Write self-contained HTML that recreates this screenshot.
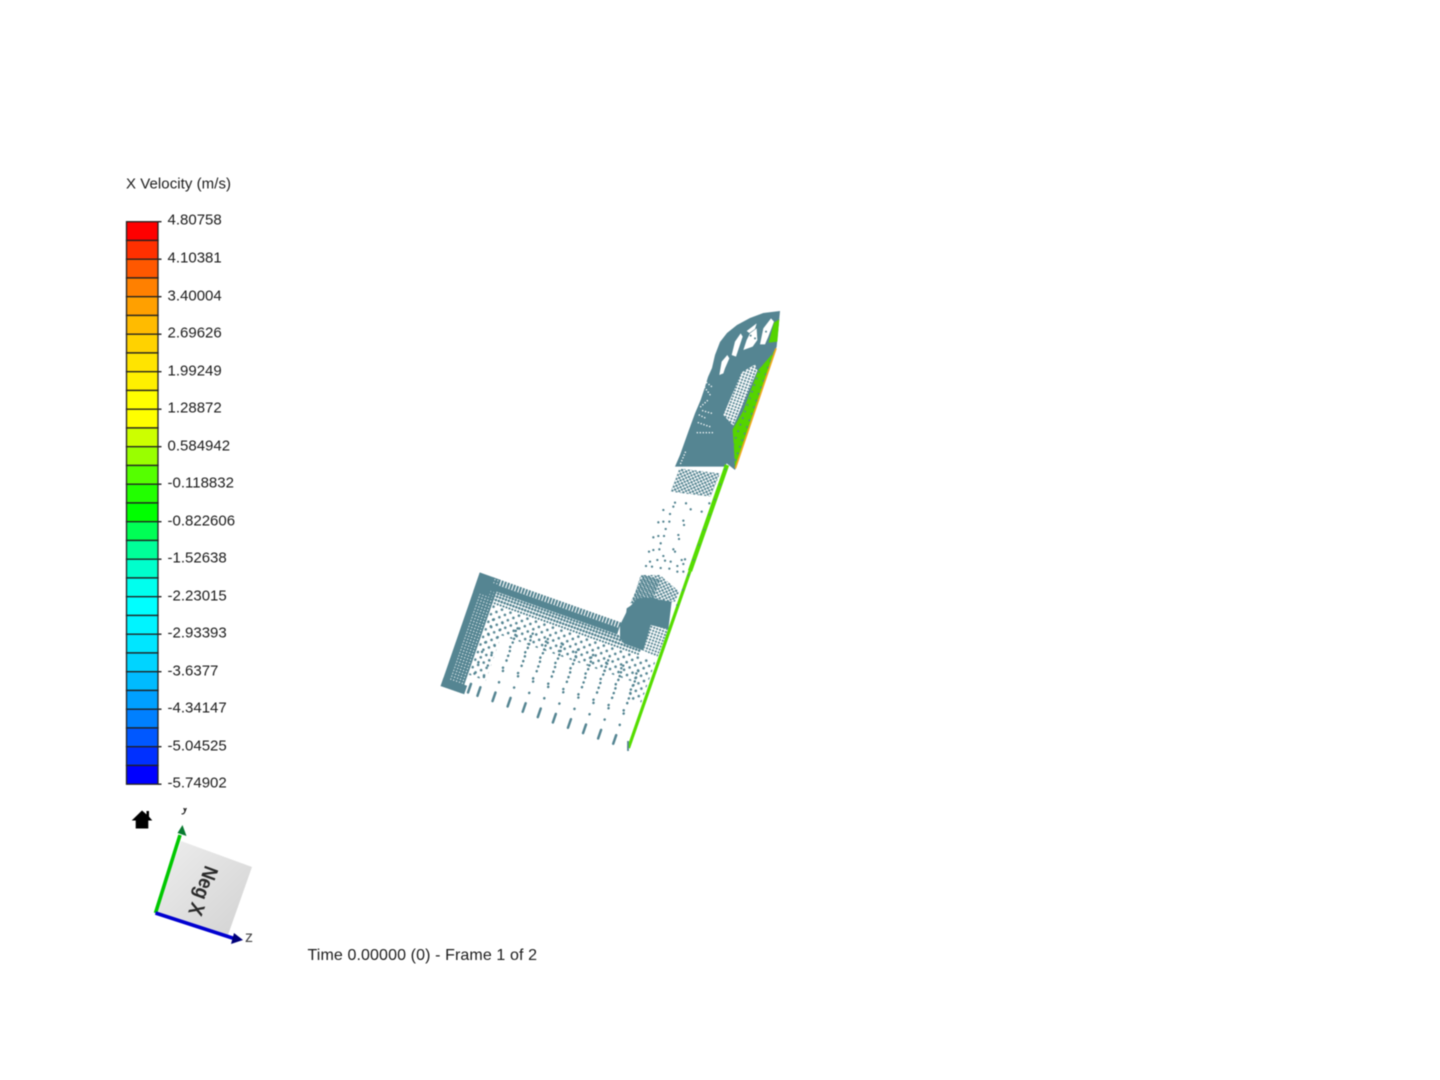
<!DOCTYPE html>
<html><head><meta charset="utf-8"><title>X Velocity</title>
<style>
html,body{margin:0;padding:0;background:#fff;width:1440px;height:1080px;overflow:hidden}
svg{position:absolute;left:0;top:0;filter:blur(.45px)}
text{font-family:"Liberation Sans",Arial,sans-serif;fill:#1c1c1c}
</style></head><body>
<svg width="1440" height="1080" viewBox="0 0 1440 1080" xmlns="http://www.w3.org/2000/svg">
<defs>
<pattern id="holes" width="3.1" height="3.1" patternUnits="userSpaceOnUse"><rect width="3.1" height="3.1" fill="#558592"/><circle cx="1.5" cy="1.5" r=".62" fill="#fff"/></pattern>
<pattern id="sparse" width="9" height="8" patternUnits="userSpaceOnUse"><circle cx="1.6" cy="1.6" r="1.3" fill="#558592"/><circle cx="6.1" cy="5.6" r="1.3" fill="#558592"/></pattern>
<pattern id="gridZ" width="9.3" height="9.3" patternUnits="userSpaceOnUse" patternTransform="rotate(19.5)"><rect width="9.3" height="9.3" fill="#fff"/><circle cx="4.6" cy="4.6" r="3.3" fill="#558592"/></pattern>
<pattern id="mottZ" width="13" height="12.400" patternUnits="userSpaceOnUse" patternTransform="rotate(19.5)"><circle cx="3.600" cy="3.600" r="3.800" fill="#558592"/><circle cx="10" cy="9.400" r="3.600" fill="#558592"/></pattern>
<pattern id="gdotsZ" width="21" height="21" patternUnits="userSpaceOnUse" patternTransform="rotate(19.5)"><circle cx="9" cy="9" r="3" fill="#558592"/></pattern>
<linearGradient id="cube" x1="0" y1="0" x2="1" y2="1"><stop offset="0" stop-color="#eeeeee"/><stop offset="1" stop-color="#d2d2d2"/></linearGradient>
<clipPath id="clipTop"><rect x="100" y="808" width="200" height="150"/></clipPath>
<path id="col" d="M0-10V-1M0-21v.1M0-33v.1M0-44v.1M0-54v.1M0-63v.1M0-71v.1M0-78v.1" fill="none" stroke="#558592" stroke-width="2.500" stroke-linecap="round"/>
<path id="col2" d="M7-36v.1M8-49v.1M7-58v.1M8-67v.1M7-75v.1" fill="none" stroke="#558592" stroke-width="2.500" stroke-linecap="round"/>
</defs>

<!-- legend -->
<text x="126" y="188.500" font-size="15" textLength="105">X Velocity (m/s)</text>
<g stroke="#222" stroke-width="1.3">
<rect x="126.500" y="221.700" width="31.500" height="18.750" fill="#ff0000"/>
<rect x="126.500" y="240.450" width="31.500" height="18.750" fill="#ff3000"/>
<rect x="126.500" y="259.200" width="31.500" height="18.750" fill="#ff5800"/>
<rect x="126.500" y="277.950" width="31.500" height="18.750" fill="#ff8000"/>
<rect x="126.500" y="296.700" width="31.500" height="18.750" fill="#ffa000"/>
<rect x="126.500" y="315.450" width="31.500" height="18.750" fill="#ffbb00"/>
<rect x="126.500" y="334.200" width="31.500" height="18.750" fill="#ffd200"/>
<rect x="126.500" y="352.950" width="31.500" height="18.750" fill="#ffe400"/>
<rect x="126.500" y="371.700" width="31.500" height="18.750" fill="#fff000"/>
<rect x="126.500" y="390.450" width="31.500" height="18.750" fill="#ffff00"/>
<rect x="126.500" y="409.200" width="31.500" height="18.750" fill="#ffff00"/>
<rect x="126.500" y="427.950" width="31.500" height="18.750" fill="#ccff00"/>
<rect x="126.500" y="446.700" width="31.500" height="18.750" fill="#99ff00"/>
<rect x="126.500" y="465.450" width="31.500" height="18.750" fill="#55ff00"/>
<rect x="126.500" y="484.200" width="31.500" height="18.750" fill="#22ff00"/>
<rect x="126.500" y="502.950" width="31.500" height="18.750" fill="#00ff00"/>
<rect x="126.500" y="521.700" width="31.500" height="18.750" fill="#00ff55"/>
<rect x="126.500" y="540.450" width="31.500" height="18.750" fill="#00ff99"/>
<rect x="126.500" y="559.200" width="31.500" height="18.750" fill="#00ffcc"/>
<rect x="126.500" y="577.950" width="31.500" height="18.750" fill="#00ffee"/>
<rect x="126.500" y="596.700" width="31.500" height="18.750" fill="#00ffff"/>
<rect x="126.500" y="615.450" width="31.500" height="18.750" fill="#00f4ff"/>
<rect x="126.500" y="634.200" width="31.500" height="18.750" fill="#00e6ff"/>
<rect x="126.500" y="652.950" width="31.500" height="18.750" fill="#00d4ff"/>
<rect x="126.500" y="671.700" width="31.500" height="18.750" fill="#00bbff"/>
<rect x="126.500" y="690.450" width="31.500" height="18.750" fill="#00a0ff"/>
<rect x="126.500" y="709.200" width="31.500" height="18.750" fill="#0080ff"/>
<rect x="126.500" y="727.950" width="31.500" height="18.750" fill="#0058ff"/>
<rect x="126.500" y="746.700" width="31.500" height="18.750" fill="#0030ff"/>
<rect x="126.500" y="765.450" width="31.500" height="18.750" fill="#0000ff"/>
<path d="M158 221.700h3.500M158 259.200h3.500M158 296.700h3.500M158 334.200h3.500M158 371.700h3.500M158 409.200h3.500M158 446.700h3.500M158 484.200h3.500M158 521.700h3.500M158 559.200h3.500M158 596.700h3.500M158 634.200h3.500M158 671.700h3.500M158 709.200h3.500M158 746.700h3.500M158 784.200h3.500" fill="none"/>
</g>
<g font-size="15">
<text x="167.500" y="224.500">4.80758</text>
<text x="167.500" y="262.500">4.10381</text>
<text x="167.500" y="300.300">3.40004</text>
<text x="167.500" y="337.500">2.69626</text>
<text x="167.500" y="375.300">1.99249</text>
<text x="167.500" y="412.500">1.28872</text>
<text x="167.500" y="450.300">0.584942</text>
<text x="167.500" y="487.500">-0.118832</text>
<text x="167.500" y="525.300">-0.822606</text>
<text x="167.500" y="562.500">-1.52638</text>
<text x="167.500" y="600.300">-2.23015</text>
<text x="167.500" y="637.500">-2.93393</text>
<text x="167.500" y="675.300">-3.6377</text>
<text x="167.500" y="712.500">-4.34147</text>
<text x="167.500" y="750.300">-5.04525</text>
<text x="167.500" y="787.500">-5.74902</text>
</g>

<!-- home icon -->
<path d="M142 810.500L146.500 814.400V811H149V816.600L152.300 820.500H148.300V828.500H135.700V820.500H131.700Z" fill="#000"/>

<!-- orientation cube -->
<polygon points="181,841 252,867 228,935 155,913" fill="url(#cube)"/>
<text transform="translate(205.400 864.600) rotate(110)" font-size="20.500" font-weight="bold" style="fill:#2a2a2a" textLength="51" lengthAdjust="spacingAndGlyphs">Neg X</text>
<path d="M155.500 913L180 835" stroke="#00c800" stroke-width="3.600" fill="none"/>
<polygon points="182.500,825 186.500,836 177.500,833" fill="#087a30"/>
<path d="M155.500 913L234 938.500" stroke="#0000d0" stroke-width="3.600" fill="none"/>
<polygon points="243,940 231,944 234,933" fill="#00007a"/>
<text x="245" y="942" font-size="16" style="fill:#444">z</text>
<g clip-path="url(#clipTop)"><text x="181" y="811" font-size="16" style="fill:#222">y</text></g>

<!-- time -->
<text x="307.500" y="960" font-size="16" textLength="229.500">Time 0.00000 (0) - Frame 1 of 2</text>

<!-- lower box, local frame -->
<g transform="matrix(.943 .333 -.326 .945 628 750)">
  <rect x="-175" y="-92" width="172" height="26" fill="url(#sparse)"/>
  <rect x="-175" y="-66" width="18" height="48" fill="url(#sparse)"/>
  <rect x="-18" y="-66" width="15" height="18" fill="url(#sparse)"/>
  <rect x="-198" y="-118" width="7" height="120" fill="#558592"/>
  <rect x="-191" y="-118" width="15" height="120" fill="url(#holes)"/>
  <rect x="-198" y="-118" width="16" height="20" fill="#558592"/>
  <rect x="-198" y="-7" width="25" height="9" fill="#558592"/>
  <rect x="-186" y="-112" width="138" height="6.500" fill="#558592"/>
  <path d="M-184-115H-48" stroke="#558592" stroke-width="6" stroke-dasharray="2.100 1.100" fill="none"/>
  <g fill="none" stroke="#558592" stroke-width="2.700" stroke-linecap="round" stroke-dasharray="0 3.100">
    <path d="M-183-104H-22"/><path d="M-183-101H-22"/><path d="M-180-97.500H-20"/>
    <path d="M-180-94H-20" stroke-width="2.200"/>
  </g>
  <use href="#col" x="-16"/><use href="#col" x="-32"/><use href="#col" x="-48"/><use href="#col" x="-64"/>
  <use href="#col" x="-80"/><use href="#col" x="-96"/><use href="#col" x="-112"/><use href="#col" x="-128"/>
  <use href="#col" x="-144"/><use href="#col" x="-160"/><use href="#col" x="-170"/>
  <use href="#col2" x="-24"/><use href="#col2" x="-40"/><use href="#col2" x="-56"/><use href="#col2" x="-72"/>
  <use href="#col2" x="-88"/><use href="#col2" x="-104"/><use href="#col2" x="-120"/><use href="#col2" x="-136"/>
  <use href="#col2" x="-152"/>
</g>

<!-- sparse channel, coords from crop at 620,460 -->
<g transform="translate(620 460) scale(.33333)">
  <polygon points="35,430 62,345 120,345 178,395 165,425" fill="url(#mottZ)"/>
  <polygon points="152,95 178,25 300,40 272,110 205,102" fill="url(#mottZ)"/>
  <path d="M130 150h.1M150 162h.1M160 140h.1M165 128h.1M115 187h.1M130 185h.1M148 185h.1M190 182h.1M192 195h.1M137 207h.1M100 232h.1M115 228h.1M132 228h.1M175 225h.1M177 237h.1M122 250h.1M87 275h.1M100 270h.1M118 268h.1M160 268h.1M165 275h.1M130 288h.1M90 305h.1M112 300h.1M135 302h.1M152 305h.1M185 300h.1M195 298h.1M78 318h.1M96 320h.1M122 324h.1M148 326h.1M172 318h.1M190 312h.1M172 335h.1M190 335h.1M198 130h.1M212 148h.1M245 155h.1M268 130h.1" fill="none" stroke="#558592" stroke-width="7" stroke-linecap="round"/>
  <polygon points="25,445 52,415 100,412 152,440 130,540 0,540 0,495" fill="#558592"/>
  <g fill="none" stroke="#fff" stroke-width="3" stroke-linecap="round" stroke-dasharray="0 9">
    <path d="M112 495L92 540"/><path d="M124 497L104 540"/><path d="M100 492L82 534"/><path d="M136 498L116 540"/>
    <path d="M45 440L28 480"/>
  </g>
</g>

<!-- junction, coords from crop at 430,560 -->
<g transform="translate(430 560) scale(.33333)">
  <polygon points="590,145 640,112 725,125 715,208 662,195 640,272 580,250" fill="#558592"/>
  <polygon points="662,195 715,208 682,292 640,272" fill="url(#gridZ)"/>
  <polygon points="600,130 640,45 690,60 670,115 625,130" fill="url(#mottZ)"/>
</g>

<!-- upper channel, coords from crop at 670,300 -->
<g transform="translate(670 300) scale(.33333)">
  <polygon fill="#558592" points="330,33 280,39 240,54 201,75 171,99 150,126 135,165 126,204 114,231 105,261 92,300 75,340 55,395 30,465 15,500 165,500 170,490 195,510 320,140"/>
  <g fill="none" stroke="#fff" stroke-width="4.500" stroke-linecap="round" stroke-dasharray="0 9">
    <path d="M82 398H128"/><path d="M88 345L108 355"/><path d="M104 262L120 284"/><path d="M92 320L114 300"/><path d="M85 368L120 380"/>
    <path d="M32 490L48 452"/><path d="M110 248L128 262"/><path d="M98 332L126 340"/>
  </g>
  <polygon points="160,345 215,217 255,193 262,212 190,378" fill="url(#gridZ)"/>
  <polygon points="300,170 318,145 195,505 192,445 188,388 220,332 250,250 265,210" fill="#55d400"/>
  <polygon points="300,170 318,145 195,505 192,445 188,388 220,332 250,250 265,210" fill="url(#gdotsZ)"/>
  <polygon points="312,68 328,58 322,125 296,128" fill="#55d400"/>
  <path d="M318 145L196 505" fill="none" stroke="#f0a81e" stroke-width="5"/>
</g>

<!-- white streaks in arc, coords from crop at 700,305 -->
<g transform="translate(700 305) scale(.33333)" fill="#fff">
  <polygon points="58,210 65,170 82,150 88,160 75,190 70,205"/>
  <polygon points="95,150 105,110 122,85 128,95 118,125 108,155"/>
  <polygon points="130,135 140,105 150,85 170,70 172,105 158,125"/>
  <polygon points="180,118 190,70 213,40 222,50 205,95 195,118"/>
  <polygon points="140,78 170,55 165,72 148,84"/>
  <path d="M152 92h.1M165 100h.1M198 80h.1" stroke="#558592" stroke-width="6" stroke-linecap="round" fill="none"/>
</g>

<!-- long wall -->
<path d="M628.500 748L690 571" fill="none" stroke="#55dd00" stroke-width="3.200"/>
<path d="M690 571L727 465" fill="none" stroke="#55dd00" stroke-width="4.400"/>
<path d="M628 751V741" stroke="#558592" stroke-width="1.800" fill="none"/>
<path d="M677 605L690 571L727 465" fill="none" stroke="#558592" stroke-width="1.800" stroke-linecap="round" stroke-dasharray="0 16"/>
</svg>
</body></html>
